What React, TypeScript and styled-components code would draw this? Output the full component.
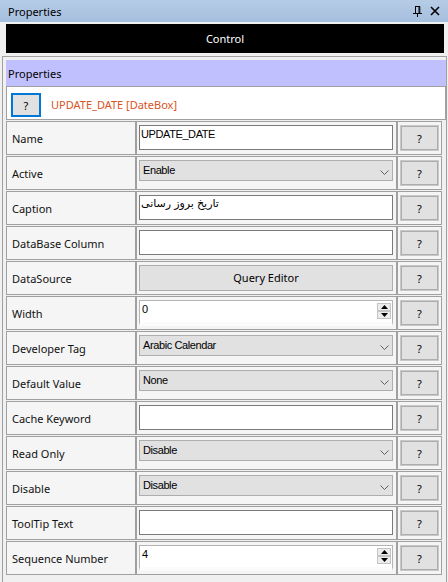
import React from 'react';
import styled, { createGlobalStyle } from 'styled-components';

const GlobalStyle = createGlobalStyle`
    body {
        margin: 0;
        background: #f0f0f0;
        font-family: "Noto Sans", "Open Sans", sans-serif;
    }
    * { box-sizing: border-box; }
`;

const Window = styled.div`
    width: 448px;
    height: 582px;
    overflow: hidden;
    background: #f0f0f0;
`;

const TitleBar = styled.div`
    height: 22px;
    display: flex;
    align-items: center;
    justify-content: space-between;
    padding: 0 8px 0 8px;
    background: linear-gradient(#b6cce6, #a5bfde);
    font-size: 11px;
    color: #000;
`;

const TitleIcons = styled.div`
    display: flex;
    align-items: center;
    gap: 8px;
`;

const ControlBar = styled.div`
    height: 29px;
    margin: 2px 4px 3px 6px;
    background: #000;
    color: #fff;
    font-size: 11px;
    display: flex;
    align-items: center;
    justify-content: center;
`;

const Panel = styled.div`
    margin-left: 2px;
    width: 445px;
    height: 526px;
    border: 1px solid #a0a0a0;
    border-bottom: none;
    padding: 3px 0 0 3px;
`;

const SectionHeader = styled.div`
    height: 26px;
    background: #c0c0ff;
    display: flex;
    align-items: center;
    padding-left: 2px;
    font-size: 11px;
`;

const IdentityBox = styled.div`
    height: 34px;
    margin-bottom: 1px;
    background: #fff;
    border: 1px solid #a0a0a0;
    display: flex;
    align-items: flex-start;
    padding: 6px 4px 0 4px;
`;

const IdentityButton = styled.button`
    width: 30px;
    height: 24px;
    padding: 0;
    border: 2px solid #0078d7;
    background: #e1e1e1;
    font-family: "Noto Sans", sans-serif;
    font-size: 11px;
    color: #000;
`;

const IdentityText = styled.span`
    margin-left: 10px;
    line-height: 24px;
    font-size: 11px;
    color: #d9531e;
`;

const PropRow = styled.div`
    display: grid;
    grid-template-columns: 130px 261px 45px;
    height: 34px;
    margin-bottom: 1px;
`;

const Cell = styled.div<{ $kind: 'label' | 'value' | 'action' }>`
    border: 1px solid #a0a0a0;
    background: #f5f5f5;
    font-size: 11px;
    ${p => p.$kind === 'label' && `
        display: flex;
        align-items: center;
        padding-left: 5px;
        color: #111;
    `}
    ${p => p.$kind === 'value' && `padding: 3px 3px 0 2px;`}
    ${p => p.$kind === 'action' && `padding: 4px 0 0 3px;`}
`;

const TextBox = styled.input`
    display: block;
    width: 254px;
    height: 25px;
    margin: 0;
    border: 1px solid #7a7a7a;
    background: #fff;
    padding: 1px 1px 9px 1px;
    font-family: "Liberation Sans", "DejaVu Sans", sans-serif;
    font-size: 11px;
    letter-spacing: -0.4px;
    color: #000;
    outline: none;
`;

const SelectBox = styled.div`
    width: 254px;
    height: 21px;
    border: 1px solid #adadad;
    background: #e1e1e1;
    display: flex;
    justify-content: space-between;
    align-items: flex-start;
    padding: 3px 3px 0 3px;
    font-family: "Liberation Sans", sans-serif;
    font-size: 11px;
    letter-spacing: -0.4px;
    color: #000;

    svg { margin-top: 6px; }
`;

const WideButton = styled.button`
    display: block;
    width: 254px;
    height: 26px;
    border: 1px solid #adadad;
    background: #e1e1e1;
    font-family: "Noto Sans", sans-serif;
    font-size: 11px;
    color: #000;
    padding: 0 0 2px;
`;

const NumberBox = styled.div`
    width: 254px;
    height: 26px;
    border: 1px solid #b4b4b4;
    border-bottom: 4px solid #fbfbfb;
    background: #fff;
    display: flex;
    justify-content: space-between;
    padding: 2px 1px 0 2px;
    font-family: "Liberation Sans", sans-serif;
    font-size: 11px;
    color: #000;
`;

const Spinner = styled.div`
    display: flex;
    flex-direction: column;
    width: 14px;
    height: 16px;
`;

const SpinHalf = styled.div`
    flex: 1;
    border: 1px solid #c4c4c4;
    background: #ececec;
    display: flex;
    align-items: center;
    justify-content: center;
`;

const ActionButton = styled.button`
    display: block;
    width: 37px;
    height: 24px;
    padding: 0;
    border: 1px solid #adadad;
    outline: 1px solid #c8c8c8;
    background: #e1e1e1;
    font-family: "Noto Sans", sans-serif;
    font-size: 11px;
    color: #000;
`;

type Prop =
    | { label: string; kind: 'text'; value: string }
    | { label: string; kind: 'select'; value: string }
    | { label: string; kind: 'button'; value: string }
    | { label: string; kind: 'number'; value: string };

const props: Prop[] = [
    { label: 'Name', kind: 'text', value: 'UPDATE_DATE' },
    { label: 'Active', kind: 'select', value: 'Enable' },
    { label: 'Caption', kind: 'text', value: 'تاریخ بروز رسانی' },
    { label: 'DataBase Column', kind: 'text', value: '' },
    { label: 'DataSource', kind: 'button', value: 'Query Editor' },
    { label: 'Width', kind: 'number', value: '0' },
    { label: 'Developer Tag', kind: 'select', value: 'Arabic Calendar' },
    { label: 'Default Value', kind: 'select', value: 'None' },
    { label: 'Cache Keyword', kind: 'text', value: '' },
    { label: 'Read Only', kind: 'select', value: 'Disable' },
    { label: 'Disable', kind: 'select', value: 'Disable' },
    { label: 'ToolTip Text', kind: 'text', value: '' },
    { label: 'Sequence Number', kind: 'number', value: '4' },
];

const Chevron = () => (
    <svg width="9" height="5" viewBox="0 0 9 5">
        <polyline points="0.5,0.5 4.5,4.5 8.5,0.5" fill="none" stroke="#606060" strokeWidth="1" />
    </svg>
);

const PinIcon = () => (
    <svg width="9" height="11" viewBox="0 0 9 11">
        <path d="M2 0.5 H7 M2.5 0.5 V7 M6 0.5 V7 M6.8 0.5 V7 M0 7.5 H9 M4.5 7.5 V11" stroke="#000" strokeWidth="1" fill="none" />
    </svg>
);

const CloseIcon = () => (
    <svg width="10" height="10" viewBox="0 0 10 10">
        <path d="M1 1 L9 9 M9 1 L1 9" stroke="#000" strokeWidth="1.6" />
    </svg>
);

const ValueEditor = ({ prop }: { prop: Prop }) => {
    switch (prop.kind) {
        case 'text':
            return <TextBox readOnly defaultValue={prop.value} />;
        case 'select':
            return (
                <SelectBox>
                    <span>{prop.value}</span>
                    <Chevron />
                </SelectBox>
            );
        case 'button':
            return <WideButton>{prop.value}</WideButton>;
        case 'number':
            return (
                <NumberBox>
                    <span>{prop.value}</span>
                    <Spinner>
                        <SpinHalf>
                            <svg width="7" height="4" viewBox="0 0 7 4"><polygon points="3.5,0 7,4 0,4" fill="#000" /></svg>
                        </SpinHalf>
                        <SpinHalf>
                            <svg width="7" height="4" viewBox="0 0 7 4"><polygon points="0,0 7,0 3.5,4" fill="#000" /></svg>
                        </SpinHalf>
                    </Spinner>
                </NumberBox>
            );
    }
};

export default function App() {
    return (
        <Window>
            <GlobalStyle />
            <TitleBar>
                <span>Properties</span>
                <TitleIcons>
                    <PinIcon />
                    <CloseIcon />
                </TitleIcons>
            </TitleBar>
            <ControlBar>Control</ControlBar>
            <Panel>
                <SectionHeader>Properties</SectionHeader>
                <IdentityBox>
                    <IdentityButton>?</IdentityButton>
                    <IdentityText>UPDATE_DATE [DateBox]</IdentityText>
                </IdentityBox>
                {props.map(p => (
                    <PropRow key={p.label}>
                        <Cell $kind="label">{p.label}</Cell>
                        <Cell $kind="value"><ValueEditor prop={p} /></Cell>
                        <Cell $kind="action"><ActionButton>?</ActionButton></Cell>
                    </PropRow>
                ))}
            </Panel>
        </Window>
    );
}
